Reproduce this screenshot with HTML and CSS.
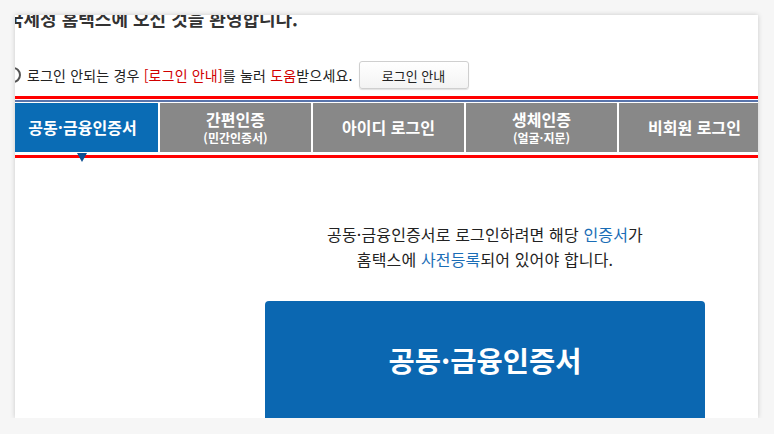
FILE: index.html
```html
<!DOCTYPE html>
<html lang="ko">
<head>
<meta charset="utf-8">
<title>홈택스 로그인</title>
<link rel="stylesheet" href="styles.css">
</head>
<body>
<div class="frame">
  <div class="page">
    <h1 class="welcome">국세청 홈택스에 오신 것을 환영합니다.</h1>
    <div class="notice">
      <svg class="ring" width="18" height="18" viewBox="0 0 18 18"><circle cx="9" cy="9" r="7" fill="none" stroke="#555" stroke-width="2"/></svg>
      <p class="notice-text">로그인 안되는 경우 <span class="red">[로그인 안내]</span>를 눌러 <span class="red">도움</span>받으세요.</p>
      <button class="guide-btn" type="button">로그인 안내</button>
    </div>
    <div class="tabbar">
      <div class="tabs">
        <a class="tab active">공동·금융인증서</a>
        <a class="tab"><span class="main">간편인증</span><span class="sub">(민간인증서)</span></a>
        <a class="tab">아이디 로그인</a>
        <a class="tab"><span class="main">생체인증</span><span class="sub">(얼굴·지문)</span></a>
        <a class="tab">비회원 로그인</a>
      </div>
    </div>
    <div class="content">
      <p class="desc">공동·금융인증서로 로그인하려면 해당 <span class="blue">인증서</span>가<br>홈택스에 <span class="blue">사전등록</span>되어 있어야 합니다.</p>
      <button class="cert-btn" type="button">공동·금융인증서</button>
    </div>
  </div>
</div>
</body>
</html>
```

FILE: styles.css
```css
* { box-sizing: border-box; }
html, body { margin: 0; padding: 0; }
body {
  background: #f6f6f6;
  font-family: "Noto Sans CJK KR", "Noto Sans", sans-serif;
  color: #222;
}
.frame {
  margin: 15px 0 0 15px;
  width: 743px;
  height: 403px;
  overflow: hidden;
  background: #fff;
  box-shadow: 0 0 5px rgba(0,0,0,0.18);
}
.page {
  margin-left: -8px;
  width: 763px;
}
.welcome {
  margin: -8px 0 0 0;
  font-size: 18px;
  line-height: 22px;
  font-weight: 700;
  color: #333;
  white-space: nowrap;
}
.notice {
  display: flex;
  align-items: center;
  height: 28px;
  margin-top: 32px;
}
.ring { margin-left: -3px; flex: none; }
.notice-text {
  margin: 0 0 0 5px;
  font-size: 14px;
  letter-spacing: 0.17px;
  color: #222;
  white-space: nowrap;
}
.red { color: #d10000; }
.guide-btn {
  margin-left: 6px;
  width: 110px;
  height: 28px;
  border: 1px solid #cfcfcf;
  border-radius: 3px;
  background: linear-gradient(#ffffff, #f3f3f3);
  box-shadow: 0 1px 1px rgba(0,0,0,0.12);
  font-family: inherit;
  font-size: 13px;
  color: #222;
  padding: 0;
}
.tabbar {
  margin-top: 7px;
  border-top: 3px solid #ff0000;
  border-bottom: 3px solid #ff0000;
  padding: 1px 0 3px;
}
.tabs {
  border-top: 2px solid #5874ab;
  padding-top: 1px;
  display: grid;
  grid-template-columns: repeat(5, 1fr);
  column-gap: 2px;
}
.tab {
  position: relative;
  height: 49px;
  background: #888888;
  color: #fff;
  font-weight: 700;
  font-size: 16px;
  display: flex;
  flex-direction: column;
  align-items: center;
  justify-content: center;
  text-decoration: none;
  line-height: 19px;
}
.tab + .tab::before {
  content: "";
  position: absolute;
  left: -3px;
  top: -1px;
  border-left: 2px solid transparent;
  border-right: 2px solid transparent;
  border-top: 3px solid #fff;
}
.tab .sub { font-size: 12px; line-height: 17px; }
.tab.active { background: #0a6cb5; }
.tab.active::after {
  content: "";
  position: absolute;
  left: 70px;
  bottom: -10px;
  border-left: 5px solid transparent;
  border-right: 5px solid transparent;
  border-top: 9px solid #0d4f92;
  z-index: 2;
}
.content {
  margin-left: 258px;
  width: 440px;
  text-align: center;
}
.desc {
  margin: 64px 0 0;
  font-size: 16px;
  letter-spacing: 0.15px;
  line-height: 25px;
  color: #222;
}
.blue { color: #1a6db6; }
.cert-btn {
  display: block;
  margin-top: 29px;
  width: 440px;
  height: 130px;
  border: 0;
  border-radius: 4px;
  background: #0b67b1;
  color: #fff;
  font-family: inherit;
  font-size: 28.5px;
  font-weight: 700;
  padding: 0 0 14px;
}
```
